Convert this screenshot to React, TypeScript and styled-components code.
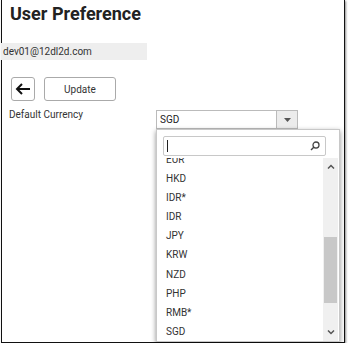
import React from "react";
import styled, { createGlobalStyle } from "styled-components";

const Global = createGlobalStyle`
  html, body { margin: 0; padding: 0; background: #fff; }
  body { font-family: Roboto, "Liberation Sans", Arial, sans-serif; color: #333; }
`;

const Frame = styled.div`
  position: relative;
  box-sizing: border-box;
  margin-left: 1px;
  width: 344px;
  height: 343px;
  border: 1px solid #111;
  border-top: none;
  box-shadow: 1px 1px 2px rgba(0,0,0,0.45);
`;

const Title = styled.h1`
  margin: 0;
  padding: 1px 0 0 8px;
  font-size: 18px;
  font-weight: 700;
  line-height: 26px;
  color: #222;
`;

const EmailBar = styled.div`
  margin: 16px 0 0 -1px;
  width: 146px;
  height: 17px;
  background: #eeeeee;
  font-size: 10px;
  line-height: 17px;
  padding-left: 2px;
  box-sizing: border-box;
  color: #333;
`;

const ButtonRow = styled.div`
  display: flex;
  gap: 9px;
  margin: 17px 0 0 9px;
`;

const Btn = styled.button<{ $w: number }>`
  box-sizing: border-box;
  width: ${p => p.$w}px;
  height: 24px;
  background: #fff;
  border: 1px solid #aaa;
  border-radius: 3px;
  font-family: inherit;
  font-size: 10px;
  color: #333;
  padding: 0;
  display: flex;
  align-items: center;
  justify-content: center;
`;

const FieldRow = styled.div`
  display: flex;
  align-items: flex-start;
  margin: 8px 0 0 7px;
`;

const Label = styled.div`
  width: 147px;
  font-size: 10px;
  line-height: 12px;
  color: #333;
`;

const SelectWrap = styled.div`
  position: relative;
  margin-top: 1px;
`;

const SelectBox = styled.div`
  box-sizing: border-box;
  width: 142px;
  height: 19px;
  border: 1px solid #bbb;
  display: flex;
  background: #fff;
`;

const SelectValue = styled.div`
  flex: 1;
  font-size: 10px;
  line-height: 17px;
  padding-left: 3px;
  color: #222;
`;

const SelectArrow = styled.div`
  width: 20px;
  border-left: 1px solid #bbb;
  background: #ececec;
  display: flex;
  align-items: center;
  justify-content: center;
`;

const Panel = styled.div`
  position: absolute;
  left: 0;
  top: 19px;
  box-sizing: border-box;
  width: 184px;
  height: 213px;
  background: #fff;
  border: 1px solid #c8c8c8;
  box-shadow: 0 2px 5px rgba(0,0,0,0.45);
  display: flex;
  flex-direction: column;
`;

const SearchBox = styled.div`
  box-sizing: border-box;
  margin: 6px 0 0 6px;
  width: 163px;
  height: 20px;
  border: 1px solid #c8c8c8;
  border-radius: 2px;
  display: flex;
  align-items: center;
  justify-content: space-between;
  padding: 0 5px 0 3px;
`;

const Caret = styled.div`
  width: 1px;
  height: 12px;
  background: #222;
`;

const ListArea = styled.div`
  flex: 1;
  display: flex;
  margin-top: 2px;
  overflow: hidden;
`;

const Viewport = styled.div`
  flex: 1;
  overflow: hidden;
`;

const Items = styled.ul`
  list-style: none;
  margin: -8px 0 0 0;
  padding: 0;
`;

const Item = styled.li`
  height: 19.1px;
  line-height: 19px;
  padding-left: 9px;
  font-size: 10px;
  color: #333;
`;

const ScrollBar = styled.div`
  width: 15px;
  margin-right: 1px;
  background: #f0f0f0;
  display: flex;
  flex-direction: column;
`;

const ScrollBtn = styled.div`
  height: 17px;
  display: flex;
  align-items: center;
  justify-content: center;
`;

const Track = styled.div`
  flex: 1;
  display: flex;
  flex-direction: column;
  padding-top: 62px;
`;

const Thumb = styled.div`
  height: 66px;
  margin: 0 1px;
  background: #c8c8c8;
`;

const currencies = ["EUR", "HKD", "IDR*", "IDR", "JPY", "KRW", "NZD", "PHP", "RMB*", "SGD"];

export default function App() {
  return (
    <>
      <Global />
      <Frame>
        <Title>User Preference</Title>
        <EmailBar>dev01@12dl2d.com</EmailBar>
        <ButtonRow>
          <Btn $w={24} aria-label="back">
            <svg width="16" height="12" viewBox="0 0 16 12">
              <path d="M15 6H2M7 1L2 6l5 5" stroke="#111" strokeWidth="2" fill="none" />
            </svg>
          </Btn>
          <Btn $w={72}>Update</Btn>
        </ButtonRow>
        <FieldRow>
          <Label>Default Currency</Label>
          <SelectWrap>
            <SelectBox>
              <SelectValue>SGD</SelectValue>
              <SelectArrow>
                <svg width="7" height="4" viewBox="0 0 7 4">
                  <path d="M0 0h7L3.5 4z" fill="#555" />
                </svg>
              </SelectArrow>
            </SelectBox>
            <Panel>
              <SearchBox>
                <Caret />
                <svg width="10" height="10" viewBox="0 0 10 10">
                  <circle cx="6" cy="4" r="3" stroke="#444" strokeWidth="1.3" fill="none" />
                  <path d="M4 6L1 9" stroke="#444" strokeWidth="1.5" />
                </svg>
              </SearchBox>
              <ListArea>
                <Viewport>
                  <Items>
                    {currencies.map(c => (
                      <Item key={c}>{c}</Item>
                    ))}
                  </Items>
                </Viewport>
                <ScrollBar>
                  <ScrollBtn>
                    <svg width="8" height="5" viewBox="0 0 8 5">
                      <path d="M1 4.5L4 1.5l3 3" stroke="#555" strokeWidth="1.5" fill="none" />
                    </svg>
                  </ScrollBtn>
                  <Track>
                    <Thumb />
                  </Track>
                  <ScrollBtn>
                    <svg width="8" height="5" viewBox="0 0 8 5">
                      <path d="M1 0.5L4 3.5l3-3" stroke="#555" strokeWidth="1.5" fill="none" />
                    </svg>
                  </ScrollBtn>
                </ScrollBar>
              </ListArea>
            </Panel>
          </SelectWrap>
        </FieldRow>
      </Frame>
    </>
  );
}
